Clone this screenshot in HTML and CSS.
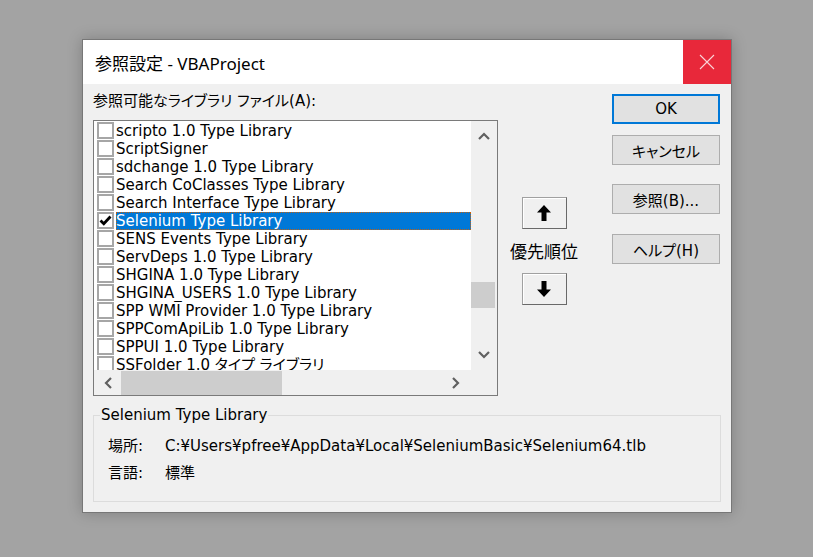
FILE: index.html
```html
<!DOCTYPE html>
<html lang="ja">
<head>
<meta charset="utf-8">
<title>参照設定 - VBAProject</title>
<link rel="stylesheet" href="styles.css">
</head>
<body>
<div class="dialog">
  <div class="titlebar">
    <div class="title">参照設定 - VBAProject</div>
    <div class="close">
      <svg width="16" height="16" viewBox="0 0 16 16"><path d="M1 1 L15 15 M15 1 L1 15" stroke="#fff" stroke-width="1.1" fill="none" opacity="0.8"/></svg>
    </div>
  </div>
  <div class="body">
    <div class="top">
      <div class="left">
        <div class="label">参照可能なライブラリ ファイル(A):</div>
        <div class="listbox">
          <div class="list-area">
            <div class="items">
              <div class="item"><span class="cb"></span><span class="txt">scripto 1.0 Type Library</span></div>
              <div class="item"><span class="cb"></span><span class="txt">ScriptSigner</span></div>
              <div class="item"><span class="cb"></span><span class="txt">sdchange 1.0 Type Library</span></div>
              <div class="item"><span class="cb"></span><span class="txt">Search CoClasses Type Library</span></div>
              <div class="item"><span class="cb"></span><span class="txt">Search Interface Type Library</span></div>
              <div class="item sel"><span class="cb"><svg width="13" height="13" viewBox="0 0 13 13"><path d="M1.5 6.5 L4.8 9.8 L11.5 2.5" stroke="#000" stroke-width="2.8" fill="none"/></svg></span><span class="txt">Selenium Type Library</span></div>
              <div class="item"><span class="cb"></span><span class="txt">SENS Events Type Library</span></div>
              <div class="item"><span class="cb"></span><span class="txt">ServDeps 1.0 Type Library</span></div>
              <div class="item"><span class="cb"></span><span class="txt">SHGINA 1.0 Type Library</span></div>
              <div class="item"><span class="cb"></span><span class="txt">SHGINA_USERS 1.0 Type Library</span></div>
              <div class="item"><span class="cb"></span><span class="txt">SPP WMI Provider 1.0 Type Library</span></div>
              <div class="item"><span class="cb"></span><span class="txt">SPPComApiLib 1.0 Type Library</span></div>
              <div class="item"><span class="cb"></span><span class="txt">SPPUI 1.0 Type Library</span></div>
              <div class="item"><span class="cb"></span><span class="txt">SSFolder 1.0 タイプ ライブラリ</span></div>
            </div>
            <div class="vscroll">
              <div class="vbtn"><svg width="12" height="8" viewBox="0 0 12 8"><path d="M1 7 L6 2 L11 7" stroke="#606060" stroke-width="2.2" fill="none"/></svg></div>
              <div class="vtrack"><div class="vthumb"></div></div>
              <div class="vbtn"><svg width="12" height="8" viewBox="0 0 12 8"><path d="M1 1 L6 6 L11 1" stroke="#606060" stroke-width="2.2" fill="none"/></svg></div>
            </div>
          </div>
          <div class="hrow">
            <div class="hscroll">
              <div class="hbtn"><svg width="8" height="12" viewBox="0 0 8 12"><path d="M7 1 L2 6 L7 11" stroke="#606060" stroke-width="2.2" fill="none"/></svg></div>
              <div class="htrack"><div class="hthumb"></div></div>
              <div class="hbtn hbtn-r"><svg width="8" height="12" viewBox="0 0 8 12"><path d="M1 1 L6 6 L1 11" stroke="#606060" stroke-width="2.2" fill="none"/></svg></div>
            </div>
            <div class="corner"></div>
          </div>
        </div>
      </div>
      <div class="mid">
        <div class="arrow-btn"><svg width="14" height="16" viewBox="0 0 14 16"><path d="M7 0 L14 7.5 L9.5 7.5 L9.5 16 L4.5 16 L4.5 7.5 L0 7.5 Z" fill="#000"/></svg></div>
        <div class="prio">優先順位</div>
        <div class="arrow-btn"><svg width="14" height="16" viewBox="0 0 14 16"><path d="M7 16 L14 8.5 L9.5 8.5 L9.5 0 L4.5 0 L4.5 8.5 L0 8.5 Z" fill="#000"/></svg></div>
      </div>
      <div class="right">
        <div class="btn ok">OK</div>
        <div class="btn cancel">キャンセル</div>
        <div class="btn browse">参照(B)...</div>
        <div class="btn help">ヘルプ(H)</div>
      </div>
    </div>
    <fieldset class="info">
      <legend>Selenium Type Library</legend>
      <div class="row"><span class="k">場所:</span><span class="v">C:¥Users¥pfree¥AppData¥Local¥SeleniumBasic¥Selenium64.tlb</span></div>
      <div class="row"><span class="k">言語:</span><span class="v">標準</span></div>
    </fieldset>
  </div>
</div>
</body>
</html>
```
FILE: styles.css
```css
html, body {
  margin: 0;
}
body {
  background: #a3a3a3;
  padding: 39px 0 0 82px;
  height: 557px;
  box-sizing: border-box;
  overflow: hidden;
}
.dialog {
  width: 650px;
  height: 474px;
  box-sizing: border-box;
  border: 1px solid #777;
  background: #f0f0f0;
  display: flex;
  flex-direction: column;
  box-shadow: 0 0 14px rgba(0, 0, 0, 0.22);
}
.titlebar {
  height: 44px;
  flex: none;
  background: #fff;
  display: flex;
  align-items: center;
}
.title {
  flex: 1;
  padding-left: 12px;
  font-family: "Noto Sans", "Noto Sans CJK JP", sans-serif;
  font-size: 17px;
  color: #000;
}
.close {
  width: 48px;
  height: 44px;
  background: #e8283a;
  display: flex;
  align-items: center;
  justify-content: center;
}
.body {
  flex: 1;
  padding: 8px 10px 10px 10px;
  display: flex;
  flex-direction: column;
  font-family: "DejaVu Sans", "Noto Sans CJK JP", sans-serif;
  font-size: 15px;
  font-feature-settings: "palt";
  color: #000;
  min-height: 0;
}
.top {
  display: flex;
  flex: none;
}
.left {
  width: 405px;
  display: flex;
  flex-direction: column;
}
.label {
  height: 18px;
  line-height: 18px;
  margin-bottom: 10px;
  white-space: nowrap;
}
.listbox {
  height: 276px;
  box-sizing: border-box;
  border: 1px solid #7a7a7a;
  background: #fff;
  display: flex;
  flex-direction: column;
}
.list-area {
  height: 249px;
  display: flex;
}
.items {
  flex: 1;
  padding-top: 1px;
  overflow: hidden;
}
.item {
  height: 18px;
  display: flex;
  align-items: flex-start;
  padding-left: 3px;
}
.cb {
  width: 17px;
  height: 17px;
  box-sizing: border-box;
  border: 2px solid #a6a6a6;
  background: #fff;
  margin-right: 2px;
  flex: none;
  display: flex;
  align-items: center;
  justify-content: center;
}
.txt {
  flex: 1;
  height: 18px;
  line-height: 18px;
  white-space: nowrap;
  overflow: hidden;
}
.sel .txt {
  background: #0078d7;
  color: #fff;
  outline: 1px dotted #c06010;
  outline-offset: -1px;
}
.vscroll {
  width: 26px;
  background: #f0f0f0;
  display: flex;
  flex-direction: column;
}
.vbtn {
  height: 30px;
  display: flex;
  align-items: center;
  justify-content: center;
}
.vtrack {
  flex: 1;
}
.vthumb {
  margin-top: 131px;
  height: 26px;
  width: 24px;
  background: #cdcdcd;
}
.hrow {
  height: 25px;
  display: flex;
  background: #f0f0f0;
}
.hscroll {
  width: 377px;
  display: flex;
}
.hbtn {
  width: 27px;
  display: flex;
  align-items: center;
  justify-content: center;
}
.hbtn-r {
  width: 30px;
}
.htrack {
  flex: 1;
  display: flex;
  align-items: center;
}
.hthumb {
  width: 161px;
  height: 24px;
  background: #cdcdcd;
}
.corner {
  width: 26px;
  background: #f0f0f0;
}
.mid {
  width: 92px;
  display: flex;
  flex-direction: column;
  align-items: center;
  padding-top: 105px;
}
.arrow-btn {
  width: 45px;
  height: 32px;
  box-sizing: border-box;
  border: 1px solid #a0a0a0;
  border-right-color: #696969;
  border-bottom-color: #696969;
  box-shadow: inset 1px 1px 0 #fff;
  background: #f0f0f0;
  display: flex;
  align-items: center;
  justify-content: center;
}
.prio {
  margin: 14px 0 12px;
  line-height: 18px;
  font-size: 17px;
}
.right {
  margin-left: 22px;
  width: 108px;
  display: flex;
  flex-direction: column;
}
.btn {
  height: 30px;
  box-sizing: border-box;
  border: 1px solid #adadad;
  background: #e1e1e1;
  display: flex;
  align-items: center;
  justify-content: center;
  white-space: nowrap;
}
.ok {
  border: 2px solid #0078d7;
  margin-top: 2px;
}
.cancel {
  margin-top: 11px;
}
.browse {
  margin-top: 19px;
}
.help {
  margin-top: 20px;
}
.info {
  margin: 12px 0 0;
  padding: 11px 0 0 0;
  border: 1px solid #dcdcdc;
  flex: 1;
  min-width: 0;
}
.info legend {
  margin-left: 6px;
  padding: 0 1px;
  line-height: 14px;
}
.row {
  display: flex;
  line-height: 27px;
  padding-left: 14px;
  white-space: nowrap;
}
.k {
  width: 57px;
  flex: none;
}
```
